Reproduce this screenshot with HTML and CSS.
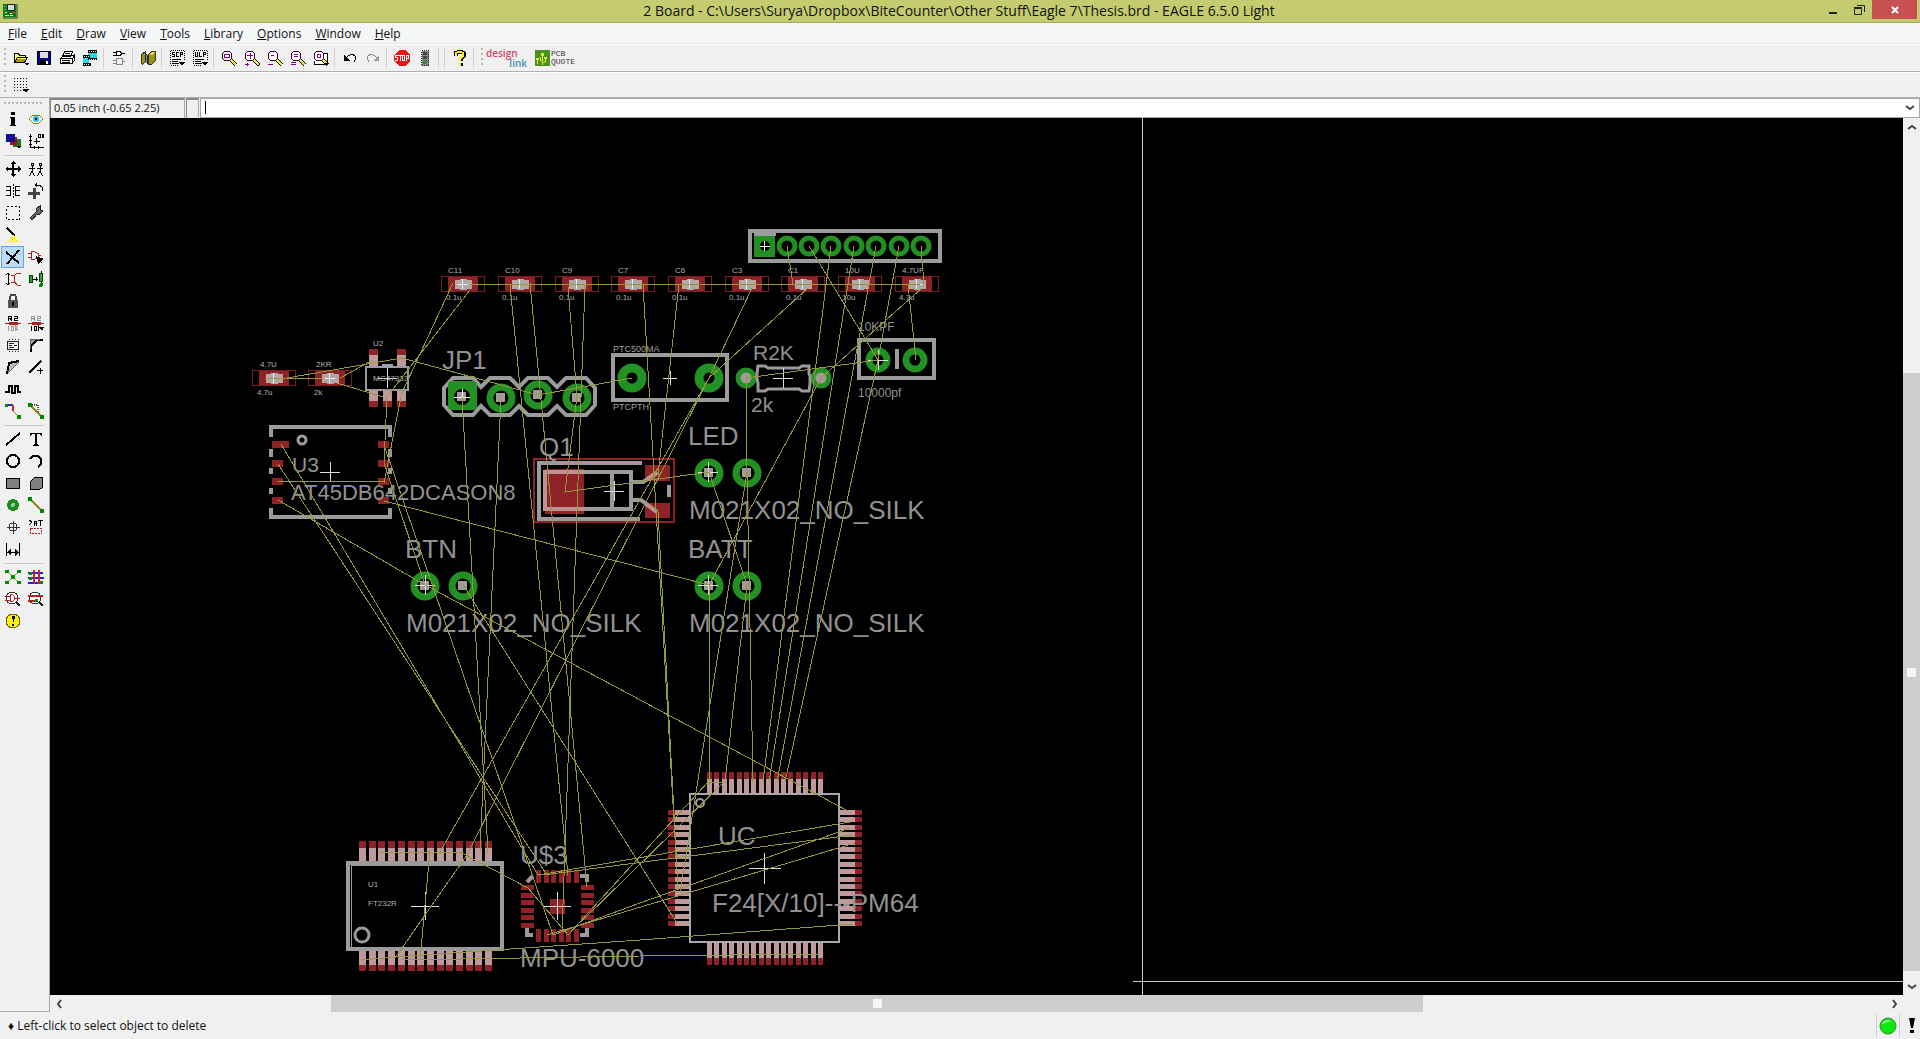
FILE: index.html
```html
<!DOCTYPE html>
<html lang="en">
<head>
<meta charset="utf-8">
<title>2 Board - EAGLE 6.5.0 Light</title>
<link rel="stylesheet" href="styles.css">
</head>
<body>
<header class="titlebar">
  <svg class="app-icon" width="16" height="16" viewBox="0 0 16 16"><path fill="#0a7a1c" d="M1 1h13v13H1z"/><path fill="none" stroke="#043" stroke-width="1" d="M15 1v14H1"/><path fill="#d8d8d8" stroke="#222" d="M5.500 1.500h7v6h-7z"/><path stroke="#fe6" fill="none" d="M3 3v1M3 6v1M3 9.500h2M3 12.500h4M8 10.500h2M8 12.500h3"/><path fill="#d33" d="M11 9h2v2h-2z"/></svg>
  <h1 class="title">2 Board - C:\Users\Surya\Dropbox\BiteCounter\Other Stuff\Eagle 7\Thesis.brd - EAGLE 6.5.0 Light</h1>
  <div class="window-buttons">
    <button class="win" aria-label="Minimize"><svg width="12" height="12"><path stroke="#222" stroke-width="2" d="M2 9h8"/></svg></button>
    <button class="win" aria-label="Restore"><svg width="12" height="12"><path fill="none" stroke="#222" d="M1.500 4.500h7v6h-7zM1 3.500h8M4 1.500h7.500V8"/></svg></button>
    <button class="win close" aria-label="Close"><svg width="12" height="12"><path stroke="#fff" stroke-width="2" d="M3 3l6 6M9 3l-6 6"/></svg></button>
  </div>
</header>

<nav class="menubar">
  <button><u>F</u>ile</button><button><u>E</u>dit</button><button><u>D</u>raw</button><button><u>V</u>iew</button><button><u>T</u>ools</button><button><u>L</u>ibrary</button><button><u>O</u>ptions</button><button><u>W</u>indow</button><button><u>H</u>elp</button>
</nav>

<div class="toolbar actions">
  <i class="handle"></i>
  <button aria-label="Open"><svg viewBox="0 0 16 16"><path fill="#ffff80" stroke="#000" d="M1.500 12.500v-9h4l1 2h6v2M1.500 12.500l3-5h10l-3 5z"/><path fill="#a90" d="M4 9h9l-2 3H3z"/><path d="M11 13h5l-2 3z"/></svg></button>
  <button aria-label="Save"><svg viewBox="0 0 16 16"><path fill="#0a0a90" stroke="#000" d="M1.500 1.500h13v13h-13z"/><path fill="#ddd" d="M4 2h8v6H4z"/><path d="M4 10h8v5H4z"/><path fill="#fff" d="M10 11h2v3h-2z"/></svg></button>
  <button aria-label="Print"><svg viewBox="0 0 16 16"><path fill="#fff" stroke="#000" d="M5.500 1.500h8l-2 5h-8zM1.500 8.500l3-3h11l-2 3zM1.500 8.500h12v5h-12zM14 7l1.500-2v5l-2 3"/><path stroke="#000" d="M6 3.500h5M5 5.500h5M3 10.500h8M3 12.500h8"/><path fill="#dd0" d="M8 11h3v1H8z"/></svg></button>
  <button aria-label="CAM processor"><svg viewBox="0 0 16 16"><path fill="#22d8ee" d="M6 1h9v8H6zM1 6h6v9H1z"/><path fill="#000" d="M6 0h9v3H6zM1 5h7v3H1zM6 8h9v2H6zM1 13h8v3H1z"/><path stroke="#fff" stroke-dasharray="1 1" d="M7 1.500h8M2 6.500h6M7 9h8M2 14.500h6"/></svg></button>
  <i class="sep"></i>
  <button aria-label="Switch to schematic"><svg viewBox="0 0 16 16"><path fill="#fff" stroke="#000" d="M5.500 1.500h3l2 1v2l-2 1h-3zM2 2.500h3M2 5h3M11 3.500h3"/><path fill="none" stroke="#888" d="M5.500 8.500h6v6h-6zM2 10.500h3M2 13h3M11 11.500h3"/></svg></button>
  <i class="sep"></i>
  <button aria-label="Use library"><svg viewBox="0 0 16 16"><path fill="#9c9410" stroke="#332" d="M1.500 4.500l4-3v10l-3 3-1-1zM8.500 4.500l3-3h4v9l-4 4h-3z"/><path fill="#224" d="M5 3l3 2v10l-3-3z"/><path fill="#88a" d="M6 5h1v8H6z"/><path fill="#e8e040" d="M9 5l3-3h3l-3 3z"/></svg></button>
  <i class="sep"></i>
  <button aria-label="Run script"><svg viewBox="0 0 16 16"><path fill="none" stroke="#000" stroke-dasharray="1 1" d="M1.500 1v14M2 .5h13M15.500 1v9M2 15.500h8"/><path fill="none" stroke="#000" d="M6 2.500H3.500v2h2v2H3M10 2.500H7.500v4H10M11.500 7V2.500h2v2h-2M3 9.500h9M3 11.500h6M3 13.500h7"/><path d="M10 12h6l-3 4z"/></svg></button>
  <button aria-label="Run ULP"><svg viewBox="0 0 16 16"><path fill="none" stroke="#000" stroke-dasharray="1 1" d="M1.500 1v14M2 .5h13M15.500 1v9M2 15.500h8"/><path fill="none" stroke="#000" d="M3.500 2v4.500h2V2M7.500 2v4.500H10M11.500 7V2.500h2v2h-2M3 9.500h9M3 11.500h6M3 13.500h7"/><path d="M10 12h6l-3 4z"/></svg></button>
  <i class="sep"></i>
  <button aria-label="Zoom to fit"><svg viewBox="0 0 16 16"><use href="#lens"/><path fill="none" stroke="#808" d="M3.500 4.500h5v3h-5z"/></svg></button>
  <button aria-label="Zoom in"><svg viewBox="0 0 16 16"><use href="#lens"/><path fill="none" stroke="#808" d="M3 5.500h6M6 3v6M1 14.500h4M3 13v4"/></svg></button>
  <button aria-label="Zoom out"><svg viewBox="0 0 16 16"><use href="#lens"/><path fill="none" stroke="#808" d="M4 5.500h3M1 14.500h5"/></svg></button>
  <button aria-label="Redraw"><svg viewBox="0 0 16 16"><use href="#lens"/><path fill="none" stroke="#808" d="M4 4.500h4M4 6.500h4M1 12.500h5M1 14.500h5"/></svg></button>
  <button aria-label="Zoom select"><svg viewBox="0 0 16 16"><path fill="#fff" stroke="#000" d="M8 3.500h6.500v11h-13V11"/><use href="#lens"/><path fill="none" stroke="#808" d="M4.500 4.500h3v3h-3z"/><path d="M11 13h5l-2 3z"/></svg></button>
  <i class="sep"></i>
  <button aria-label="Undo"><svg viewBox="0 0 16 16"><path fill="none" stroke="#000" d="M4 8l2-2 3-1.500h2l2.500 2v3L12 11.500"/><path d="M2 5v6h6z"/></svg></button>
  <button aria-label="Redo"><svg viewBox="0 0 16 16"><path fill="none" stroke="#888" d="M12 8l-2-2-3-1.500H5L2.500 6.500v3L4 11.500"/><path fill="#999" d="M14 5v6H8z"/></svg></button>
  <i class="sep"></i>
  <button aria-label="Stop"><svg viewBox="0 0 16 16"><path fill="#f01010" d="M5 0h6l5 5v6l-5 5H5l-5-5V5z"/><path fill="none" stroke="#fff" d="M4 5.500H1.500v2h2v3H1M4 5.500h4M6 5v6M8.500 5.500h2v5h-2zM12.500 11V5.500h2V8h-2"/></svg></button>
  <button aria-label="Go"><svg viewBox="0 0 16 16"><path fill="#888" stroke="#222" stroke-dasharray="1 1" d="M4.500 .5h7v15h-7z"/><path fill="#444" d="M6 2h4v3H6zM6 6h4v3H6z"/><circle cx="8" cy="12" r="2" fill="#2a8a4a"/></svg></button>
  <i class="sep"></i><i class="sep"></i>
  <button aria-label="Help"><svg viewBox="0 0 16 16"><path fill="none" stroke="#000" stroke-width="4" d="M4 6V3l2-1h4l2 1v3L9 9v2M9 13v3"/><path fill="none" stroke="#ffee00" stroke-width="2" d="M4 6V3l2-1h3l2 1v3L8 9v2M8 13v3"/></svg></button>
  <i class="sep"></i>
  <i class="handle"></i>
  <a class="brand design" href="#design-link"><span>design</span><span class="link-word">link</span></a>
  <a class="brand quote" href="#pcb-quote"><svg width="15" height="16" viewBox="0 0 15 16"><path fill="#4d9221" d="M0 0h15v16H0z"/><path fill="none" stroke="#d9ec4a" d="M2.500 9v5M5.500 7v4h2V5M10.500 9v3h-3v3"/><path fill="#d9ec4a" d="M6 3h3v3H6zM9 7h3v2H9zM1 8h3v2H1z"/></svg><span>PCB<br>QUOTE</span></a>
</div>

<div class="toolbar params">
  <i class="handle"></i>
  <button aria-label="Grid"><svg viewBox="0 0 16 16"><path stroke="#000" stroke-dasharray="1 2" d="M1 1.500h15M1 4.500h15M1 7.500h15M1 10.500h15M1 13.500h10"/><path d="M10 12h6l-3 4z"/></svg></button>
</div>

<main class="workspace">
  <aside class="tools">
    <i class="handle-top"></i>
    <div class="tool-grid">
      <button aria-label="Info"><svg viewBox="0 0 16 16"><path d="M6 1h4v3H6zM5 6h5v8h1v1H5v-1h1V7H5z"/></svg></button>
      <button aria-label="Show"><svg viewBox="0 0 16 16"><path fill="#fff" stroke="#880" d="M1 8l4-4h6l4 4-4 4H5z"/><circle cx="8" cy="8" r="3" fill="#2cc8e8"/><path d="M7 7h2v2H7z"/></svg></button>
      <button aria-label="Display"><svg viewBox="0 0 16 16"><path fill="#1a7a1a" d="M8 6h8v8H8z"/><path fill="#a01020" d="M5 4h7v8H5z"/><path fill="#101090" d="M1 1h9v8H1z"/><path d="M11 13h5l-2 3z"/></svg></button>
      <button aria-label="Mark"><svg viewBox="0 0 16 16"><path fill="none" stroke="#000" d="M2.500 1v13.500H16M1 3.500h3M1 7.500h3M1 11.500h3M6.500 13v3M10.500 13v3M8.500 5v6M6 8.500h6M10.500 1.500h2v3h-2zM14.500 1.500h1v3h-1z"/></svg></button>
    </div>
    <hr>
    <div class="tool-grid">
      <button aria-label="Move"><svg viewBox="0 0 16 16"><path stroke="#000" stroke-width="2" d="M8 1v14M1 8h14"/><path d="M8 0l3 3H5zM8 16l3-3H5zM0 8l3-3v6zM16 8l-3-3v6z"/></svg></button>
      <button aria-label="Copy"><svg viewBox="0 0 16 16"><path fill="none" stroke="#000" d="M3 2.500h2v2H3zM4 5v5l-2.500 5M4 10l2.500 5M1 7.500h6M11 2.500h2v2h-2zM12 5v5l-2.500 5M12 10l2.500 5M9 7.500h6"/></svg></button>
      <button aria-label="Mirror"><svg viewBox="0 0 16 16"><path fill="none" stroke="#000" d="M1 3.500h4.500v9H1M1 7.500h4M15 3.500h-4.500v9H15M15 7.500h-4"/><path stroke="#000" stroke-dasharray="2 1" d="M8.500 1v14"/></svg></button>
      <button aria-label="Rotate"><svg viewBox="0 0 16 16"><path fill="#444" d="M0 9h12v3H0zM5 5h3v11H5z"/><path fill="none" stroke="#000" d="M7 2h4l3 2 1 4"/><path d="M6 2l3-2v4z"/></svg></button>
      <button aria-label="Group"><svg viewBox="0 0 16 16"><path fill="none" stroke="#000" stroke-dasharray="2 2" d="M1.500 1.500h13v13h-13z"/></svg></button>
      <button aria-label="Change"><svg viewBox="0 0 16 16"><path fill="#666" stroke="#222" d="M2 13l6-6V4l4-3v4l3 1-3 3H9l-5 6z"/></svg></button>
      <button aria-label="Paste"><svg viewBox="0 0 16 16"><path stroke="#000" stroke-width="2" d="M2 1l8 8"/><path fill="#fff040" d="M8 8l3 2 3 5H3z"/></svg></button>
      <span></span>
      <button class="active" aria-label="Delete"><svg viewBox="0 0 16 16"><path stroke="#000" stroke-width="2" d="M1 3l13 11M14 1L2 15"/></svg></button>
      <button aria-label="Add"><svg viewBox="0 0 16 16"><path fill="none" stroke="#a22" d="M3 2.500h3l4 2v4l-4 2H3zM0 4.500h3M0 8.500h3M10 6.500h3"/><path d="M8 7l8 3-3 2 2 4-3-3-2 2z"/></svg></button>
      <button aria-label="Pinswap"><svg viewBox="0 0 16 16"><path fill="none" stroke="#a22" d="M16 2h-4l-3 3v5l3 4h4M6 4.500h4M6 11.500h4"/><path fill="none" stroke="#000" d="M3 2v12M1 4l2-2 2 2M1 12l2 2 2-2"/></svg></button>
      <button aria-label="Replace"><svg viewBox="0 0 16 16"><path fill="#3a9a3a" stroke="#040" d="M1.500 4.500h3v7h-3zM11.500 2.500h3v8h-3z"/><path fill="none" stroke="#000" d="M5 8h5M8 6v4M13 0v2M13 11v4"/><circle cx="13" cy="14" r="2" fill="#080"/></svg></button>
      <button aria-label="Lock"><svg viewBox="0 0 16 16"><path fill="none" stroke="#444" stroke-width="2" d="M5 8V4l1-2h4l1 2v4"/><path fill="#555" d="M3 7h10v8H3z"/><path d="M7 9h2v4H7z"/></svg></button>
      <span></span>
      <button aria-label="Name"><svg viewBox="0 0 16 16"><path fill="none" stroke="#000" d="M3.500 6V1.500h3v2h-3M5 3l2 3M9 1.500h3v2H9.500v2H13"/><path fill="none" stroke="#a22" d="M0 8.500h16M4 7.500h8v2H4z"/><path fill="none" stroke="#999" d="M3.500 11v5M6.500 11.500h2v4h-2zM10.500 10v6M13 11l-2 2 2 3"/></svg></button>
      <button aria-label="Value"><svg viewBox="0 0 16 16"><path fill="none" stroke="#999" d="M3.500 6V1.500h3v2h-3M5 3l2 3M9 1.500h3v2H9.500v2H13"/><path fill="none" stroke="#a22" d="M0 8.500h16M4 7.500h8v2H4z"/><path fill="none" stroke="#000" d="M3.500 11v5M6.500 11.500h2v4h-2zM10.500 10v6"/><path d="M11 12h5l-2 4z"/></svg></button>
      <button aria-label="Smash"><svg viewBox="0 0 16 16"><path fill="none" stroke="#222" d="M2.500 4.500h11v8h-11zM4 6.500h5M4 8.500h3M9 8.500h3M4 10.500h5"/><path stroke="#222" stroke-dasharray="1 2" d="M4 2.500h11M4 14.500h11"/></svg></button>
      <button aria-label="Miter"><svg viewBox="0 0 16 16"><path fill="#999" d="M2 2h11L5 7l-3 8z"/><path fill="none" stroke="#000" stroke-width="2" d="M3 15V9l6-6h6"/><path stroke="#666" d="M2.500 2v10M2 2.500h10"/></svg></button>
      <button aria-label="Split"><svg viewBox="0 0 16 16"><path fill="#bbb" d="M2 14L4 4l11-2z"/><path fill="none" stroke="#000" stroke-width="2" d="M2 15L4 4l10-2"/><path stroke="#666" d="M3 14L14 3"/></svg></button>
      <button aria-label="Optimize"><svg viewBox="0 0 16 16"><path stroke="#000" stroke-width="2" d="M1 14L13 2"/><path stroke="#000" d="M9 11.500h6M12.500 9v6"/></svg></button>
      <button aria-label="Meander"><svg viewBox="0 0 16 16"><path fill="none" stroke="#000" stroke-width="2" d="M0 11h4V5h3v7h3V5h3v6h3"/></svg></button>
      <span></span>
      <button aria-label="Route"><svg viewBox="0 0 16 16"><path fill="none" stroke="#22d" stroke-width="2" d="M2 2h6"/><path fill="none" stroke="#d22" stroke-width="2" d="M8 2v6"/><path stroke="#882" d="M8 8l6 6"/><path fill="#080" d="M0 1h3v3H0zM12 12h4v4h-4z"/></svg></button>
      <button aria-label="Ripup"><svg viewBox="0 0 16 16"><path fill="none" stroke="#555" stroke-dasharray="1 1" stroke-width="2" d="M2 2h8v8l4 4"/><path stroke="#982" stroke-width="2" d="M2 2l12 12"/><path fill="#080" d="M0 0h4v4H0zM12 12h4v4h-4z"/></svg></button>
    </div>
    <hr>
    <div class="tool-grid">
      <button aria-label="Wire"><svg viewBox="0 0 16 16"><path stroke="#000" stroke-width="2" d="M1 14L15 2"/></svg></button>
      <button aria-label="Text"><svg viewBox="0 0 16 16"><path d="M2 2h12v3h-1l-1-2H9v10l2 1v1H5v-1l2-1V3H4L3 5H2z"/></svg></button>
      <button aria-label="Circle"><svg viewBox="0 0 16 16"><circle cx="8" cy="8" r="6" fill="none" stroke="#000" stroke-width="2"/></svg></button>
      <button aria-label="Arc"><svg viewBox="0 0 16 16"><path fill="none" stroke="#000" stroke-width="2" d="M2 6a6 6 0 1 1 8 8"/></svg></button>
      <button aria-label="Rectangle"><svg viewBox="0 0 16 16"><path fill="#808080" stroke="#000" d="M1.500 3.500h13v10h-13z"/></svg></button>
      <button aria-label="Polygon"><svg viewBox="0 0 16 16"><path fill="#808080" stroke="#000" d="M2.500 14.500v-8l4-4h8v10l-3 2z"/></svg></button>
      <button aria-label="Via"><svg viewBox="0 0 16 16"><circle cx="8" cy="8" r="6" fill="#1c8c1c"/><circle cx="8" cy="8" r="2" fill="#9c9"/></svg></button>
      <button aria-label="Signal"><svg viewBox="0 0 16 16"><path stroke="#982" stroke-width="2" d="M2 2l12 12"/><path fill="#080" d="M0 0h4v4H0zM12 12h4v4h-4z"/></svg></button>
      <button aria-label="Hole"><svg viewBox="0 0 16 16"><circle cx="8" cy="8" r="4" fill="none" stroke="#333"/><path stroke="#333" d="M8.500 2v13M2 8.500h13"/></svg></button>
      <button aria-label="Attribute"><svg viewBox="0 0 16 16"><path fill="none" stroke="#000" d="M1 1l3 2-3 3M6.500 7V2.500h2V7M6 4.500h3M10 1.500h5M12.500 1v6"/><path fill="none" stroke="#a22" stroke-dasharray="2 1" d="M2.500 9.500h11v5h-11z"/></svg></button>
      <button aria-label="Dimension"><svg viewBox="0 0 16 16"><path fill="none" stroke="#000" d="M1.500 2v13M14.500 2v13M2 11.500h12"/><path d="M2 11l4-3v7zM14 11l-4-3v7z"/></svg></button>
      <span></span>
    </div>
    <hr>
    <div class="tool-grid">
      <button aria-label="Ratsnest"><svg viewBox="0 0 16 16"><path stroke="#882" d="M2 2l12 12M14 2L2 14"/><path fill="#080" d="M0 1h4v3H0zM12 1h4v3h-4zM6 6h4v4H6zM0 12h4v3H0zM12 12h4v3h-4z"/></svg></button>
      <button aria-label="Autorouter"><svg viewBox="0 0 16 16"><path stroke="#22d" stroke-width="2" d="M0 4h15M0 9h16M0 14h14"/><path stroke="#c22" stroke-width="2" d="M6 1v14M11 1v14"/><path fill="#080" d="M1 3h3v3H1zM1 8h3v3H1zM12 12h3v3h-3z"/></svg></button>
      <button aria-label="ERC"><svg viewBox="0 0 16 16"><circle cx="7" cy="7" r="6" fill="#fff" stroke="#333"/><path fill="none" stroke="#a22" d="M0 5.500h5M0 9.500h5M5.500 3.500h2l2 2v3l-2 2h-2zM10 7h5"/><path stroke="#222" stroke-width="2" d="M11 11l4 4"/></svg></button>
      <button aria-label="DRC"><svg viewBox="0 0 16 16"><circle cx="7" cy="7" r="6" fill="#fff" stroke="#333"/><path stroke="#b22" stroke-width="2" d="M0 5h15M0 10h10"/><path fill="#080" d="M7 8h3v3H7z"/><path stroke="#222" stroke-width="2" d="M11 11l4 4"/></svg></button>
      <button aria-label="Errors"><svg viewBox="0 0 16 16"><circle cx="8" cy="8" r="7" fill="#ffee10" stroke="#660"/><path d="M7 3h3l-1 6H8zM7 11h2v2H7z"/></svg></button>
    </div>
  </aside>

  <section class="editor">
    <div class="command-row">
      <output class="coords">0.05 inch (-0.65 2.25)</output>
      <span class="spacer-box"></span>
      <div class="command"><input type="text" aria-label="Command line"><i class="caret"></i><button aria-label="Command history"><svg width="10" height="8"><path fill="none" stroke="#444" stroke-width="2" d="M1 2l4 3 4-3"/></svg></button></div>
    </div>
    <div class="view">
      <svg class="board" role="img" aria-label="Board layout">
        <defs>
          <g id="lens"><circle cx="6" cy="6" r="5" fill="#fff" stroke="#303"/><path stroke="#000" stroke-width="4" d="M10 10l5 5"/><path stroke="#ee3" stroke-width="2" d="M10 10l5 5"/></g>
          <g id="chip"><path fill="#8f2226" d="M-14-7h30V8h-30z"/><path fill="none" stroke="#7c1a1e" d="M-20.500-7.500h43v15h-43z"/><path fill="#b9a5a2" d="M-7-4H10V5H-7z"/><path fill="#aaa" d="M-2-5H5V6H-2z"/><path stroke="#eee" d="M.5-5V5M-4 .5H6"/></g>
          <g id="pin"><circle r="11" fill="#000" stroke="#239023" stroke-width="7"/><path fill="#a39a9a" d="M-5-5h9v9h-9z"/></g>
          <g id="via"><circle r="8" fill="none" stroke="#239023" stroke-width="5"/></g>
          <g id="drill"><circle r="10" fill="none" stroke="#239023" stroke-width="9"/></g>
          <path id="cross" stroke="#ddd" d="M-10 .5h20M.5-10v20"/>
          <path id="bigcross" stroke="#ddd" d="M-14 .5h28M.5-14v28"/>
        </defs>
        <g transform="translate(-50 -118)">
          <!-- chip capacitors and resistors -->
          <g class="parts">
            <use href="#chip" x="462" y="284"/><use href="#chip" x="519" y="284"/><use href="#chip" x="576" y="284"/><use href="#chip" x="632" y="284"/><use href="#chip" x="689" y="284"/><use href="#chip" x="746" y="284"/><use href="#chip" x="802" y="284"/><use href="#chip" x="859" y="284"/><use href="#chip" x="916" y="284"/><use href="#chip" x="273" y="378"/><use href="#chip" x="329" y="378"/>
          </g>
          <!-- header -->
          <g>
            <rect class="silk" x="750" y="231" width="190" height="30"/>
            <path fill="#239023" d="M754 236h21v21h-21z"/><path fill="#9b9b9b" d="M754 232h22v4h-22z"/><circle cx="765" cy="246" r="5"/>
            <use href="#via" x="787" y="246"/><use href="#via" x="809" y="246"/><use href="#via" x="831" y="246"/><use href="#via" x="854" y="246"/><use href="#via" x="876" y="246"/><use href="#via" x="899" y="246"/><use href="#via" x="921" y="246"/>
            <path stroke="#fff" d="M760 246.500h10M764.500 241v10"/>
          </g>
          <!-- U2 -->
          <g class="crisp">
            <path fill="#8f2226" d="M369 349h9v7h-9zM397 349h9v7h-9zM369 400h9v7h-9zM383 400h9v7h-9zM397 400h9v7h-9z"/>
            <path fill="#bf9a9c" d="M369 355h9v12h-9zM397 355h9v12h-9zM369 389h9v12h-9zM383 389h9v12h-9zM397 389h9v12h-9z"/>
            <rect x="366" y="367" width="42" height="23" fill="#000" stroke="#9b9b9b" stroke-width="2"/>
            <path fill="#9aa0a8" d="M382 364h11v4h-11z"/><use href="#cross" x="387" y="378"/>
          </g>
          <!-- JP1 -->
          <g>
            <path class="silk" d="M444 388l9-10h20l8 9 9-9h20l9 9 9-9h20l9 9 9-9h20l9 10v17l-9 10h-20l-9-9-9 9h-20l-9-9-9 9h-20l-9-9-8 9h-20l-9-10z"/>
            <rect x="448" y="381" width="29" height="29" rx="4" fill="#239023"/><circle cx="462" cy="397" r="8"/><path fill="#a39a9a" d="M457 392h9v9h-9z"/>
            <use href="#pin" x="501" y="398"/><use href="#pin" x="538" y="395"/><use href="#pin" x="577" y="398"/>
            <path stroke="#fff" d="M454 397.500h16M462.500 389v16"/>
          </g>
          <!-- U3 -->
          <g>
            <path class="silk" d="M271 437v-10h119v10M271 508v9h119v-9M271 449v8M390 449v8M271 468v6M390 468v6M271 488v6M390 488v6"/>
            <circle cx="302" cy="440" r="4" fill="none" stroke="#9b9b9b" stroke-width="3"/>
            <path fill="#8f2226" d="M272 441h17v7h-17zM272 460h11v7h-11zM272 478h11v7h-11zM272 497h11v7h-11zM378 441h11v7h-11zM378 460h11v7h-11zM378 478h11v7h-11zM378 497h11v7h-11z"/>
            <use href="#cross" x="330" y="472"/>
          </g>
          <!-- fuse, resistor, capacitor -->
          <g>
            <rect class="silk" x="613" y="355" width="114" height="45"/><use href="#drill" x="632" y="378"/><use href="#drill" x="709" y="378"/><path stroke="#ddd" d="M663 378.500h14M670.500 371v14"/>
            <circle cx="746" cy="378" r="8" fill="#a39a9a" stroke="#239023" stroke-width="5"/><circle cx="821" cy="378" r="8" fill="#a39a9a" stroke="#239023" stroke-width="5"/>
            <path fill="none" stroke="#9b9b9b" stroke-width="3" d="M758 366h7l3 2h31l3-2h7v8l1 2v8l-1 7h-7l-3-2h-31l-3 2h-7v-8l-1-4v-6z"/><use href="#cross" x="783" y="378"/>
            <rect class="silk" x="859" y="340" width="75" height="38"/><circle cx="878" cy="360" r="9" fill="none" stroke="#239023" stroke-width="7"/><circle cx="915" cy="360" r="9" fill="none" stroke="#239023" stroke-width="7"/><path class="silk" d="M897 349v20"/><use href="#cross" x="878" y="360"/>
          </g>
          <!-- Q1 -->
          <g>
            <path fill="#8f2226" d="M545 469h39v45h-39zM645 465h25v16h-25zM645 503h25v15h-25z"/>
            <rect x="534" y="459" width="140" height="63" fill="none" stroke="#8f2226" stroke-width="2"/>
            <path class="silk" d="M642 463H539v56h101M631 482h12l14-9M631 500h10l16 12M669 485v12"/>
            <path class="silk" d="M545 472h86v37h-86zM612 472v37"/>
            <path fill="none" stroke="#bf9090" stroke-width="4" d="M584 472h-39v37h39M646 480l11-8M646 504l11 8"/>
            <use href="#cross" x="614" y="491"/>
          </g>
          <!-- two-pin headers -->
          <g>
            <use href="#pin" x="709" y="473"/><use href="#pin" x="747" y="473"/><use href="#pin" x="709" y="586"/><use href="#pin" x="747" y="586"/><use href="#pin" x="425" y="586"/><use href="#pin" x="463" y="586"/>
            <use href="#cross" x="708" y="472"/><use href="#cross" x="708" y="585"/><use href="#cross" x="425" y="585"/>
          </g>
          <!-- U1 -->
          <g class="crisp">
            <path stroke="#8f2226" stroke-width="22" stroke-dasharray="7 2.700" d="M359 852h134M359 960h134"/>
            <path stroke="#bf9a9c" stroke-width="15" stroke-dasharray="7 2.700" d="M359 855.500h134M359 957.500h134"/>
            <rect x="348" y="863" width="154" height="86" fill="#000" stroke="#9b9b9b" stroke-width="4"/>
            <path fill="none" stroke="#9b9b9b" d="M351.500 948v-82.500H500"/>
          </g>
          <circle cx="362" cy="935" r="7" fill="none" stroke="#9b9b9b" stroke-width="3"/><use href="#bigcross" x="425" y="906"/>
          <!-- U$3 -->
          <g class="crisp">
            <path stroke="#8f2226" stroke-width="13" stroke-dasharray="5 2.500" d="M536 876.500h43M536 935.500h43M527.500 885v43M587.500 885v43"/>
            <path fill="#8f2226" d="M550 899h15v15h-15z"/>
          </g>
          <path class="silk" d="M527 882l6-6M580 876h7v6M527 928v7h6M587 928v7h-7"/><use href="#bigcross" x="557" y="906"/>
          <!-- UC -->
          <g class="crisp">
            <path stroke="#8f2226" stroke-width="22" stroke-dasharray="5 2.400" d="M707 783h116M707 954h116M679 810v116M851 810v116"/>
            <path stroke="#bf9a9c" stroke-width="15" stroke-dasharray="5 2.400" d="M707 786.500h116M707 950.500h116M682.500 810v116M847.500 810v116"/>
            <rect x="690" y="794" width="149" height="148" fill="#000" stroke="#a8a8ac" stroke-width="2"/>
          </g>
          <circle cx="700" cy="803" r="4" fill="none" stroke="#9b9b9b" stroke-width="2"/><path stroke="#ddd" d="M749 868.500h32M764.500 853v31"/>

          <g class="label">
            <g class="s8"><text x="448" y="273">C11</text><text x="505" y="273">C10</text><text x="562" y="273">C9</text><text x="618" y="273">C7</text><text x="675" y="273">C6</text><text x="732" y="273">C3</text><text x="788" y="273">C1</text><text x="845" y="273">10U</text><text x="902" y="273">4.7UF</text><text x="260" y="367">4.7U</text><text x="316" y="367">2KR</text><text x="373" y="346">U2</text><text x="373" y="381">MG47333</text>
            <text x="446" y="300">0.1u</text><text x="502" y="300">0.1u</text><text x="559" y="300">0.1u</text><text x="616" y="300">0.1u</text><text x="672" y="300">0.1u</text><text x="729" y="300">0.1u</text><text x="786" y="300">0.1u</text><text x="842" y="300">10u</text><text x="899" y="300">4.7u</text><text x="257" y="395">4.7u</text><text x="314" y="395">2k</text><text x="368" y="887">U1</text><text x="368" y="906">FT232R</text></g>
            <g class="s9"><text x="613" y="352">PTC500MA</text><text x="613" y="410">PTCPTH</text></g>
            <g class="s12"><text x="858" y="331">10KPF</text><text x="858" y="397">10000pf</text></g>
            <g class="s21"><text x="753" y="360">R2K</text><text x="751" y="412">2k</text><text x="292" y="472">U3</text></g>
            <g class="s22"><text x="291" y="500">AT45DB642DCASON8</text></g>
            <g class="s26"><text x="442" y="369">JP1</text><text x="539" y="456">Q1</text><text x="688" y="445">LED</text><text x="689" y="519">M021X02_NO_SILK</text><text x="688" y="558">BATT</text><text x="689" y="632">M021X02_NO_SILK</text><text x="405" y="558">BTN</text><text x="406" y="632">M021X02_NO_SILK</text><text x="520" y="864">U$3</text><text x="520" y="967">MPU-6000</text><text x="718" y="845">UC</text><text x="712" y="912">F24[X/10]---PM64</text></g>
          </g>

          <!-- airwires -->
          <path class="wires" d="M470 284H920M453 283L401 395M470 290L390 393M387 397L384 463M401 397L384 483M265 378H323M287 378L402 358L538 395L632 378M340 378L373 360M337 383L383 397
            M462 397L488 852M501 398L480 850M510 285L568 875M530 283L587 887M568 287L577 396L565 492L709 472M585 285L562 933M643 284L678 890M679 284L658 475M658 512L677 870
            M752 288L709 378L808 288M709 378L440 852M709 378L467 855L395 958M380 852H460L528 888L568 935M430 850L420 960M362 960L395 957L640 940L853 924M402 960L640 956L820 954
            M538 875L850 822M543 875L853 835M547 935L855 843M553 935L640 903L850 828M568 935L708 782H724M581 922L724 782M463 585L677 923M278 500L425 585L848 811
            M281 444L538 875M278 464L547 875M384 463L425 585M384 445L553 935M278 481H384M384 501L709 585M709 472L747 585L725 782M746 378L747 472L753 782M747 472L680 893M709 585V785
            M821 378L709 585M746 378L878 360M922 288L821 378M908 285L916 360M921 246L924 284M787 246L793 284M809 246L878 360M831 246L763 782M854 246L769 782M876 246L777 782M899 246L878 360L785 782"/>
          <path stroke="#c8c8c8" d="M1142.500 118v877M1133 981.500h3000"/>
        </g>
      </svg>
      <div class="vscroll">
        <button aria-label="Scroll up"><svg width="10" height="8"><path fill="none" stroke="#444" stroke-width="2" d="M1 6l4-3 4 3"/></svg></button>
        <i class="v-before"></i><i class="thumb v-thumb"></i><i class="v-after"></i>
        <button aria-label="Scroll down"><svg width="10" height="8"><path fill="none" stroke="#444" stroke-width="2" d="M1 2l4 3 4-3"/></svg></button>
      </div>
    </div>
    <div class="hscroll">
      <button aria-label="Scroll left"><svg width="8" height="10"><path fill="none" stroke="#444" stroke-width="2" d="M6 1L3 5l3 4"/></svg></button>
      <i class="h-before"></i><i class="thumb h-thumb"></i><i class="h-after"></i>
      <button aria-label="Scroll right"><svg width="8" height="10"><path fill="none" stroke="#444" stroke-width="2" d="M2 1l3 4-3 4"/></svg></button>
    </div>
  </section>
</main>

<footer class="status">
  <span class="hint">♦ Left-click to select object to delete</span>
  <span class="led"><svg width="18" height="18"><circle cx="9" cy="9" r="8" fill="#0ce80c" stroke="#3a8a3a"/><path fill="#9dff9d" d="M3 7a6 6 0 0 1 9-3z"/></svg></span>
  <span class="alert"><svg width="8" height="16"><path d="M1 0h6L5 10H3zM2 12h4v3H2z"/></svg></span>
</footer>
</body>
</html>
```
FILE: styles.css
```css
* { box-sizing: border-box; }
body {
  margin: 0;
  height: 100vh;
  display: flex;
  flex-direction: column;
  background: #f0f0f0;
  color: #111;
  font-family: "Open Sans", "Noto Sans", sans-serif;
  font-size: 12px;
  overflow: hidden;
}
button {
  border: 0;
  padding: 0;
  background: none;
  font: inherit;
  color: inherit;
  display: flex;
  align-items: center;
  justify-content: center;
}
svg { display: block; flex: none; }

.titlebar {
  display: flex;
  align-items: center;
  height: 23px;
  padding: 0 3px 0 2px;
  background: #c5cc6f;
  border-bottom: 1px solid #a3aa68;
}
.title {
  flex: 1;
  margin: 0;
  padding-left: 80px;
  text-align: center;
  font-size: 14px;
  font-weight: 400;
  line-height: 22px;
  white-space: nowrap;
}
.window-buttons { display: flex; align-self: flex-start; }
.win { width: 26px; height: 19px; }
.close { width: 45px; background: #c75050; }

.menubar {
  display: flex;
  height: 21px;
  padding-left: 1px;
  background: #f5f6f7;
  border-bottom: 1px solid #e4e4e4;
}
.menubar button { padding: 0 7px; }

.toolbar {
  display: flex;
  align-items: center;
  background: #f0f0f0;
  border-top: 1px solid #fff;
  border-bottom: 1px solid #b0b0b0;
}
.toolbar button { width: 23px; height: 22px; }
.toolbar button svg, .tools button svg {
  width: 16px;
  height: 16px;
  shape-rendering: crispEdges;
}
.actions { height: 28px; }
.params { height: 26px; }
.handle {
  width: 9px;
  height: 20px;
  background: repeating-linear-gradient(#b8b8b8 0 2px, transparent 2px 5px) 4px 0 / 2px 100% no-repeat;
}
.sep {
  width: 6px;
  height: 20px;
  background: linear-gradient(#cfcfcf, #cfcfcf) 2px 0 / 1px 100% no-repeat;
}
.brand {
  display: flex;
  color: #d2486a;
  text-decoration: none;
}
.design {
  flex-direction: column;
  width: 41px;
  margin-right: 8px;
  font-size: 10px;
  font-weight: 600;
  line-height: 10px;
}
.link-word { color: #4090b8; align-self: flex-end; }
.quote {
  align-items: center;
  gap: 1px;
  color: #333;
  font: 8px/8px "Liberation Mono", monospace;
}

.workspace { flex: 1; display: flex; min-height: 0; }
.tools {
  width: 50px;
  padding-left: 1px;
  border-right: 1px solid #a8a8a8;
  border-bottom: 1px solid #b0b0b0;
}
.handle-top {
  display: block;
  width: 40px;
  height: 10px;
  margin-left: 3px;
  background: repeating-linear-gradient(90deg, #b8b8b8 0 2px, transparent 2px 4px) 0 4px / 100% 2px no-repeat;
}
.tool-grid { display: grid; grid-template-columns: 23px 23px; grid-auto-rows: 22px; }
.tools hr {
  width: 40px;
  height: 1px;
  margin: 3px 0 2px 3px;
  border: 0;
  background: #c8c8c8;
}
.active { background: #bcdcf8; outline: 1px solid #68a0d8; outline-offset: -1px; }

.editor { flex: 1; min-width: 0; display: flex; flex-direction: column; }
.command-row { display: flex; height: 20px; gap: 1px; }
.coords, .spacer-box {
  border-top: 2px solid #888;
  border-left: 1px solid #888;
  border-right: 1px solid #aaa;
}
.coords {
  width: 135px;
  padding-left: 3px;
  font-size: 11px;
  line-height: 16px;
  white-space: nowrap;
}
.spacer-box { width: 13px; }
.command {
  position: relative;
  flex: 1;
  display: flex;
  background: #fff;
  border: 1px solid #a8a8a8;
}
.command input { flex: 1; border: 0; padding: 0 5px; outline: 0; font: inherit; background: none; }
.command button { width: 18px; }
.caret { position: absolute; left: 4px; top: 2px; width: 1px; height: 13px; background: #000; }

.view { flex: 1; display: flex; min-height: 0; }
.board { flex: 1; min-width: 0; height: auto; background: #000; }
.crisp, .parts, .wires { shape-rendering: crispEdges; }
.silk { fill: none; stroke: #9b9b9b; stroke-width: 4px; }
.wires { fill: none; stroke: #96963a; stroke-width: 1px; }
.label { fill: #929292; font-family: "Liberation Sans", Arial, sans-serif; }
.s8 { font-size: 8px; fill: #b0b0b0; }
.s9 { font-size: 9px; fill: #a0a0a0; }
.s12 { font-size: 12px; }
.s21 { font-size: 21px; }
.s22 { font-size: 22px; }
.s26 { font-size: 26px; }

.vscroll { width: 17px; display: flex; flex-direction: column; }
.vscroll button { height: 17px; width: 17px; }
.hscroll { height: 17px; padding-right: 17px; display: flex; }
.hscroll button { height: 17px; width: 17px; }
.thumb { background: linear-gradient(#f5f5f5, #f5f5f5) center / 9px 9px no-repeat #cdcdcd; }
.v-before { flex: 238; }
.v-thumb { flex: 598; }
.v-after { flex: 7; }
.h-before { flex: 264; }
.h-thumb { flex: 1092; }
.h-after { flex: 463; }

.status { display: flex; align-items: center; height: 27px; padding-left: 8px; }
.hint { flex: 1; }
.led {
  display: flex;
  align-items: center;
  height: 24px;
  padding: 0 2px;
  border-left: 1px solid #d0d0d0;
  border-right: 1px solid #d0d0d0;
}
.alert { width: 20px; padding-left: 8px; }
```
